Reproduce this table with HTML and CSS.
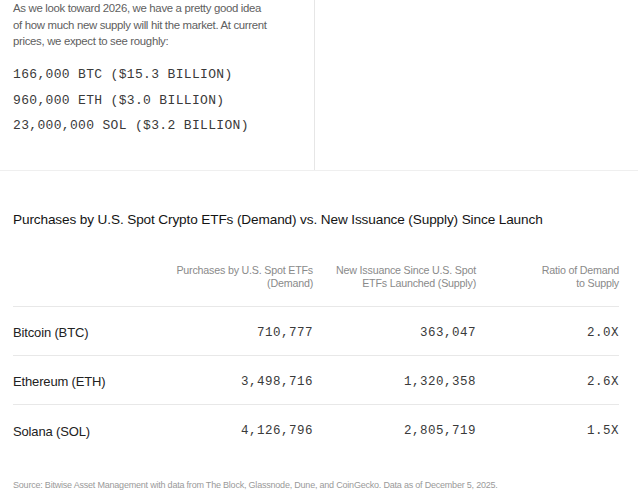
FILE: index.html
```html
<!DOCTYPE html>
<html>
<head>
<meta charset="utf-8">
<link rel="stylesheet" href="styles.css">
</head>
<body>
<section class="top">
  <div class="intro">
    <p class="lead">As we look toward 2026, we have a pretty good idea of how much new supply will hit the market. At current prices, we expect to see roughly:</p>
    <ul class="supply">
      <li>166,000 BTC ($15.3 BILLION)</li>
      <li>960,000 ETH ($3.0 BILLION)</li>
      <li>23,000,000 SOL ($3.2 BILLION)</li>
    </ul>
  </div>
  <div class="side"></div>
</section>
<section class="chart">
  <h2 class="title">Purchases by U.S. Spot Crypto ETFs (Demand) vs. New Issuance (Supply) Since Launch</h2>
  <div class="table">
    <div class="row head">
      <div class="cell"></div>
      <div class="cell num">Purchases by U.S. Spot ETFs<br>(Demand)</div>
      <div class="cell num">New Issuance Since U.S. Spot<br>ETFs Launched (Supply)</div>
      <div class="cell num">Ratio of Demand<br>to Supply</div>
    </div>
    <div class="row">
      <div class="cell name">Bitcoin (BTC)</div>
      <div class="cell num mono">710,777</div>
      <div class="cell num mono">363,047</div>
      <div class="cell num mono">2.0X</div>
    </div>
    <div class="row">
      <div class="cell name">Ethereum (ETH)</div>
      <div class="cell num mono">3,498,716</div>
      <div class="cell num mono">1,320,358</div>
      <div class="cell num mono">2.6X</div>
    </div>
    <div class="row last">
      <div class="cell name">Solana (SOL)</div>
      <div class="cell num mono">4,126,796</div>
      <div class="cell num mono">2,805,719</div>
      <div class="cell num mono">1.5X</div>
    </div>
  </div>
  <p class="source">Source: Bitwise Asset Management with data from The Block, Glassnode, Dune, and CoinGecko. Data as of December 5, 2025.</p>
</section>
</body>
</html>
```

FILE: styles.css
```css
* { box-sizing: border-box; }
html, body {
  margin: 0;
  padding: 0;
  background: #fff;
  font-family: "Liberation Sans", Arial, sans-serif;
}
.top {
  display: grid;
  grid-template-columns: 315px 1fr;
  height: 171px;
  border-bottom: 1px solid #efefef;
}
.intro {
  padding: 0 0 0 13px;
  border-right: 1px solid #e6e6e6;
}
.lead {
  margin: 0;
  font-size: 11.4px;
  line-height: 16.5px;
  letter-spacing: -0.32px;
  color: #606060;
  width: 258px;
}
.supply {
  list-style: none;
  margin: 12.5px 0 0;
  padding: 0;
}
.supply li {
  font-family: "Liberation Mono", "Courier New", monospace;
  font-size: 13px;
  line-height: 25.5px;
  letter-spacing: 0.33px;
  color: #3a3a3a;
}
.chart {
  padding: 39px 19px 0 13px;
}
.title {
  margin: 0;
  font-size: 13.6px;
  line-height: 20px;
  font-weight: normal;
  letter-spacing: -0.12px;
  color: #141414;
}
.table {
  margin-top: 34px;
}
.row {
  display: grid;
  grid-template-columns: 150px 150px 163px 143px;
  border-bottom: 1px solid #e8e8e8;
  height: 49px;
  align-items: center;
  padding-top: 3px;
}
.row.head {
  height: 43px;
  padding-top: 0;
  align-items: start;
  font-size: 10.7px;
  line-height: 13px;
  color: #8a8a8a;
  letter-spacing: -0.2px;
}
.row.last { border-bottom: none; }
.cell.num { text-align: right; }
.name {
  font-size: 13px;
  letter-spacing: -0.15px;
  color: #222;
}
.mono {
  font-family: "Liberation Mono", "Courier New", monospace;
  font-size: 12.5px;
  letter-spacing: 0.5px;
  color: #3a3a3a;
}
.source {
  margin: 25px 0 0;
  font-size: 9px;
  line-height: 12px;
  letter-spacing: -0.21px;
  color: #9a9a9a;
}
```
